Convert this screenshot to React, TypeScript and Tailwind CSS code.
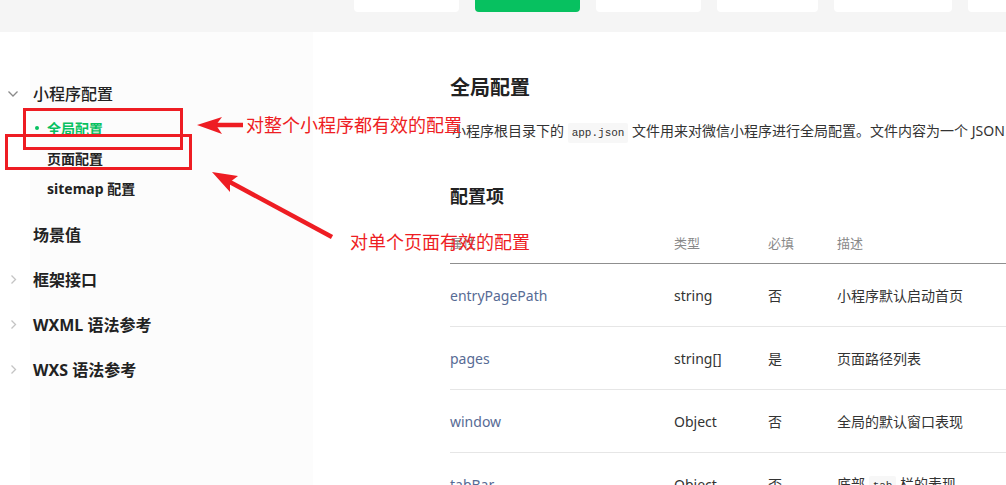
import React from "react";

const codeCls =
  "font-['Liberation_Mono',monospace] text-[11px] bg-[#f7f7f7] px-[4px] py-[4px] rounded-[2px] text-[#333]";

const rows: { name: string; type: string; req: string; desc: React.ReactNode }[] = [
  { name: "entryPagePath", type: "string", req: "否", desc: "小程序默认启动首页" },
  { name: "pages", type: "string[]", req: "是", desc: "页面路径列表" },
  { name: "window", type: "Object", req: "否", desc: "全局的默认窗口表现" },
  {
    name: "tabBar",
    type: "Object",
    req: "否",
    desc: (
      <>
        底部 <code className={codeCls}>tab</code> 栏的表现
      </>
    ),
  },
];

function ChevronDown() {
  return (
    <svg width="12" height="8" viewBox="0 0 12 8" className="shrink-0">
      <path d="M1.5 1.5 L6 6 L10.5 1.5" fill="none" stroke="#8a8a8a" strokeWidth="1.3" />
    </svg>
  );
}

function ChevronRight() {
  return (
    <svg width="7" height="11" viewBox="0 0 7 11" className="shrink-0">
      <path d="M1.5 1.5 L5.5 5.5 L1.5 9.5" fill="none" stroke="#c4c4c4" strokeWidth="1.3" />
    </svg>
  );
}

export default function App() {
  return (
    <div className="relative w-[1006px] h-[485px] overflow-hidden bg-white font-['Noto_Sans','Noto_Sans_CJK_SC',sans-serif] text-[#333]">
      {/* top bar */}
      <div className="h-[32px] bg-[#f5f5f5] flex items-start pl-[354px] gap-[16px] overflow-hidden">
        <div className="w-[105px] h-[12px] shrink-0 bg-white rounded-b-[4px]" />
        <div className="w-[105px] h-[12px] shrink-0 bg-[#07c160] rounded-b-[4px]" />
        <div className="w-[105px] h-[12px] shrink-0 bg-white rounded-b-[4px]" />
        <div className="w-[101px] h-[12px] shrink-0 bg-white rounded-b-[4px]" />
        <div className="w-[118px] h-[12px] shrink-0 bg-white rounded-b-[4px]" />
        <div className="w-[80px] h-[12px] shrink-0 bg-white rounded-b-[4px]" />
      </div>

      <div className="flex h-[453px]">
        {/* sidebar */}
        <div className="w-[313px] shrink-0 bg-[linear-gradient(to_right,#ffffff_30px,#fcfcfc_30px)] pt-[47px]">
          <div className="h-[30px] flex items-center">
            <div className="w-[33px] flex justify-start pl-[7px]">
              <ChevronDown />
            </div>
            <span className="text-[16px] font-medium text-[#222]">小程序配置</span>
          </div>
          <div className="mt-[4px]">
            <div className="h-[30px] flex items-center pl-[35px]">
              <span className="w-[4px] h-[4px] rounded-full bg-[#07c160] mr-[8px]" />
              <span className="text-[14px] font-bold text-[#07c160]">全局配置</span>
            </div>
            <div className="h-[30px] flex items-center pl-[47px]">
              <span className="text-[14px] font-bold text-[#222]">页面配置</span>
            </div>
            <div className="h-[30px] flex items-center pl-[47px]">
              <span className="text-[14px] font-bold text-[#222]">sitemap 配置</span>
            </div>
          </div>
          <div className="mt-[9px]">
            {[
              { t: "场景值", c: false },
              { t: "框架接口", c: true },
              { t: "WXML 语法参考", c: true },
              { t: "WXS 语法参考", c: true },
            ].map((it) => (
              <div key={it.t} className="h-[45px] flex items-center">
                <div className="w-[33px] pl-[10px] flex">{it.c ? <ChevronRight /> : null}</div>
                <span className="text-[16px] font-bold text-[#222]">{it.t}</span>
              </div>
            ))}
          </div>
        </div>

        {/* main */}
        <div className="flex-1 pl-[137px] min-w-0 overflow-hidden">
          <h1 className="mt-[42px] text-[20px] leading-[28px] font-bold text-[#222]">全局配置</h1>
          <p className="mt-[17px] text-[14px] leading-[24px] whitespace-nowrap pl-[2px] text-[#333]">
            小程序根目录下的 <code className={codeCls}>app.json</code> 文件用来对微信小程序进行全局配置。文件内容为一个 JSON
            对象，有以下属性：
          </p>
          <h2 className="mt-[38px] text-[18px] leading-[26px] font-bold text-[#222]">配置项</h2>
          <div className="mt-[15px] w-[700px]">
            <div className="h-[40px] flex items-center border-b border-[#8f8f8f] text-[13px] text-[#888]">
              <div className="w-[224px]">属性</div>
              <div className="w-[94px]">类型</div>
              <div className="w-[69px]">必填</div>
              <div className="flex-1">描述</div>
            </div>
            {rows.map((r) => (
              <div key={r.name} className="h-[63px] flex items-center border-b border-[#e6e6e6] text-[14px]">
                <div className="w-[224px] text-[#576b95]">{r.name}</div>
                <div className="w-[94px] text-[#333]">{r.type}</div>
                <div className="w-[69px] text-[#333]">{r.req}</div>
                <div className="flex-1 text-[#333]">{r.desc}</div>
              </div>
            ))}
          </div>
        </div>
      </div>

      {/* annotations overlay */}
      <svg className="absolute left-0 top-0 pointer-events-none" width="1006" height="485" viewBox="0 0 1006 485">
        <rect x="24.5" y="109.5" width="157" height="39" fill="none" stroke="#ee1d23" strokeWidth="3" />
        <rect x="6.5" y="135.5" width="184" height="33" fill="none" stroke="#ee1d23" strokeWidth="3" />
        <line x1="243" y1="125" x2="214" y2="125" stroke="#ee1d23" strokeWidth="4.5" />
        <polygon points="197,125 222,117 216,125 222,134" fill="#ee1d23" />
        <line x1="332" y1="237" x2="228" y2="181" stroke="#ee1d23" strokeWidth="4.5" />
        <polygon points="212,172 238,176 230,182 230,192" fill="#ee1d23" />
      </svg>
      <span className="absolute left-[246px] top-[113px] text-[18px] leading-[24px] text-[#ee1d23] whitespace-nowrap pointer-events-none">
        对整个小程序都有效的配置
      </span>
      <span className="absolute left-[350px] top-[230px] text-[18px] leading-[24px] text-[#ee1d23] whitespace-nowrap pointer-events-none">
        对单个页面有效的配置
      </span>
    </div>
  );
}
